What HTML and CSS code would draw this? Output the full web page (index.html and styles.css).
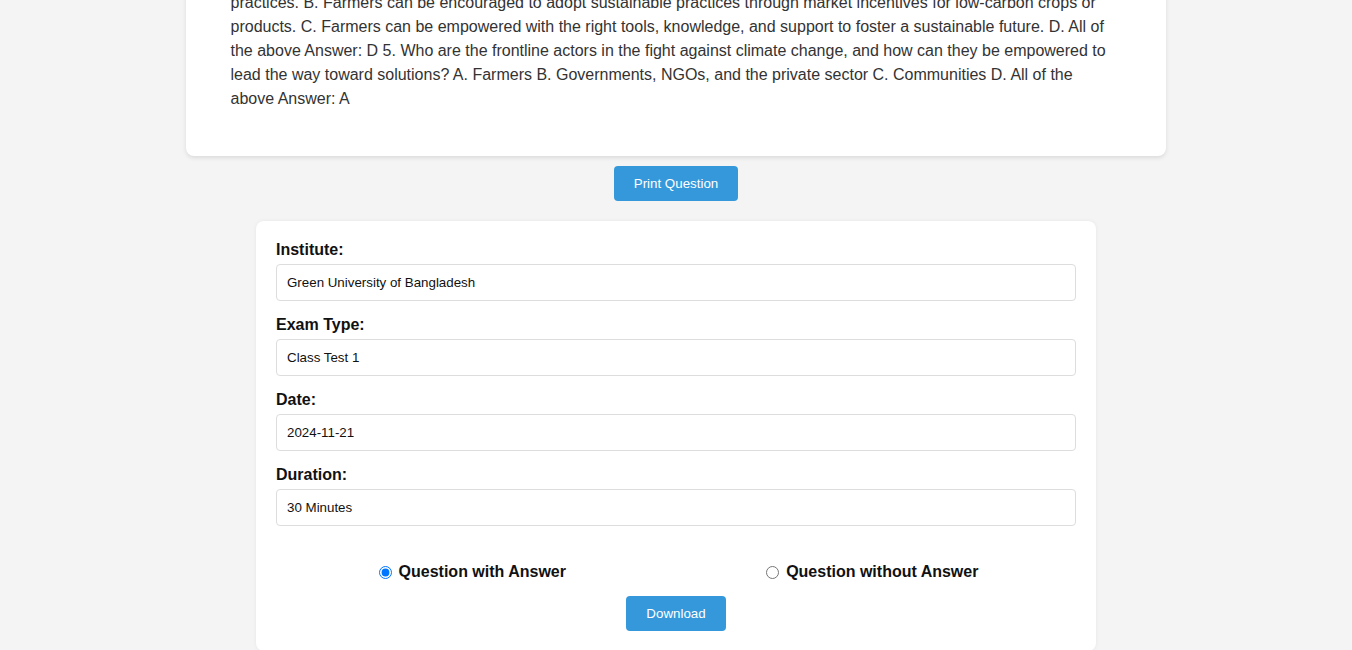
FILE: index.html
```html
<!DOCTYPE html>
<html lang="en">
<head>
<meta charset="utf-8">
<title>Question Generator</title>
<link rel="stylesheet" href="styles.css">
</head>
<body>
<main class="page">
  <section class="question-card">
    <p class="question-text">practices. B. Farmers can be encouraged to adopt sustainable practices through market incentives for low-carbon crops or products. C. Farmers can be empowered with the right tools, knowledge, and support to foster a sustainable future. D. All of the above Answer: D 5. Who are the frontline actors in the fight against climate change, and how can they be empowered to lead the way toward solutions? A. Farmers B. Governments, NGOs, and the private sector C. Communities D. All of the above Answer: A</p>
  </section>

  <div class="print-row">
    <button class="btn" type="button">Print Question</button>
  </div>

  <form class="form-card">
    <label class="field-label" for="institute">Institute:</label>
    <input class="field-input" id="institute" type="text" value="Green University of Bangladesh">

    <label class="field-label" for="exam">Exam Type:</label>
    <input class="field-input" id="exam" type="text" value="Class Test 1">

    <label class="field-label" for="date">Date:</label>
    <input class="field-input" id="date" type="text" value="2024-11-21">

    <label class="field-label" for="duration">Duration:</label>
    <input class="field-input" id="duration" type="text" value="30 Minutes">

    <div class="radio-row">
      <label class="radio-label"><input type="radio" name="mode" checked> Question with Answer</label>
      <label class="radio-label"><input type="radio" name="mode"> Question without Answer</label>
    </div>

    <div class="download-row">
      <button class="btn" type="button">Download</button>
    </div>
  </form>
</main>
</body>
</html>
```

FILE: styles.css
```css
html, body {
  margin: 0;
  padding: 0;
  background: #f4f4f4;
  font-family: "Liberation Sans", Arial, sans-serif;
  color: #333;
}

.page {
  display: flex;
  flex-direction: column;
  align-items: center;
  margin-top: -29px;
}

.question-card {
  width: 980px;
  box-sizing: border-box;
  background: #fff;
  border-radius: 8px;
  box-shadow: 0 2px 4px rgba(0, 0, 0, 0.1);
  padding: 20px 45.5px 45px 44.5px;
}

.question-text {
  margin: 0;
  font-size: 16px;
  line-height: 24px;
  color: #333;
}

.print-row {
  margin-top: 10px;
  display: flex;
  justify-content: center;
}

.btn {
  font-family: "Liberation Sans", Arial, sans-serif;
  font-size: 13.333px;
  line-height: 15px;
  padding: 10px 20px;
  border: none;
  border-radius: 4px;
  background: #3498db;
  color: #fff;
  cursor: pointer;
}

.form-card {
  margin-top: 20px;
  width: 840px;
  box-sizing: border-box;
  background: #fff;
  border-radius: 8px;
  box-shadow: 0 0 4px rgba(0, 0, 0, 0.06);
  padding: 20px;
  display: flex;
  flex-direction: column;
}

.field-label {
  font-size: 16px;
  line-height: 18px;
  font-weight: bold;
  color: #111;
  margin-bottom: 5px;
}

.field-input {
  font-family: "Liberation Sans", Arial, sans-serif;
  font-size: 13.333px;
  line-height: 15px;
  padding: 10px;
  border: 1px solid #ddd;
  border-radius: 4px;
  color: #111;
  margin: 0 0 15px;
}

.radio-row {
  margin-top: 22px;
  display: flex;
  justify-content: space-around;
}

.radio-label {
  font-size: 16px;
  line-height: 18px;
  font-weight: bold;
  color: #111;
  display: flex;
  align-items: center;
}

.radio-label input {
  margin: 0 7px 0 5px;
  width: 13px;
  height: 13px;
}

.download-row {
  margin-top: 15px;
  display: flex;
  justify-content: center;
}
```
